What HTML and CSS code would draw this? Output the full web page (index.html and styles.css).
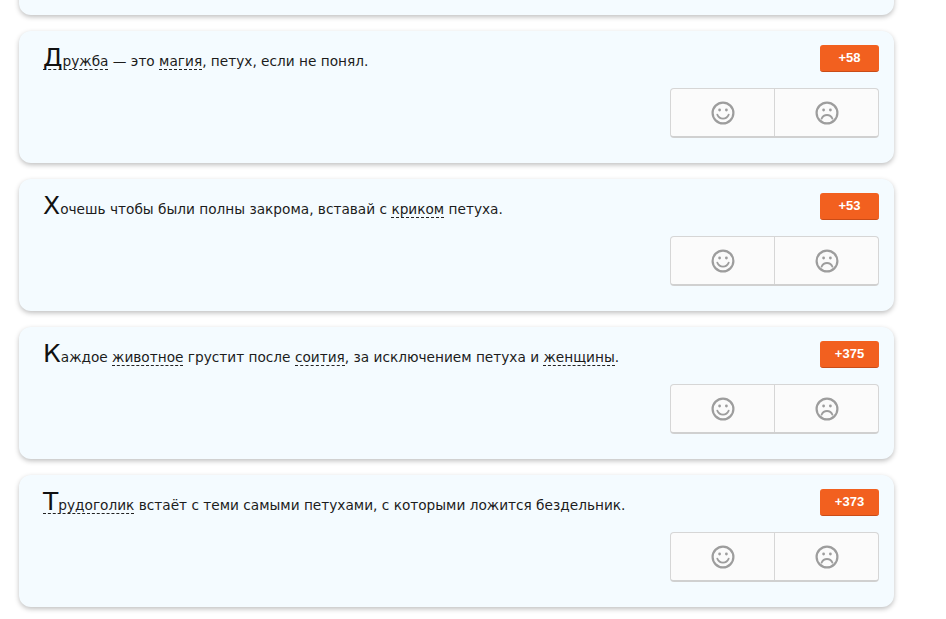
FILE: index.html
```html
<!DOCTYPE html>
<html lang="ru">
<head>
<meta charset="utf-8">
<title>Цитаты</title>
<link rel="stylesheet" href="styles.css">
</head>
<body>
<svg class="defs" width="0" height="0" aria-hidden="true">
  <symbol id="smile" viewBox="0 0 24 24">
    <circle cx="12" cy="12" r="10.4" fill="none" stroke="currentColor" stroke-width="2.2"/>
    <circle cx="8.6" cy="9" r="1.4" fill="currentColor"/>
    <circle cx="15.4" cy="9" r="1.4" fill="currentColor"/>
    <path d="M6.3 13.6c1.1 2.6 3.2 4 5.700 4s4.600-1.400 5.700-4" fill="none" stroke="currentColor" stroke-width="1.800" stroke-linecap="round"/>
  </symbol>
  <symbol id="sad" viewBox="0 0 24 24">
    <circle cx="12" cy="12" r="10.4" fill="none" stroke="currentColor" stroke-width="2.2"/>
    <circle cx="8.6" cy="9" r="1.4" fill="currentColor"/>
    <circle cx="15.4" cy="9" r="1.4" fill="currentColor"/>
    <path d="M6.600 17.600c1.100-2.400 3-3.600 5.400-3.600s4.300 1.200 5.400 3.600" fill="none" stroke="currentColor" stroke-width="1.800" stroke-linecap="round"/>
  </symbol>
</svg>
<main class="list">
  <article class="card"></article>

  <article class="card">
    <div class="head">
      <p class="quote"><a class="term"><span class="cap">Д</span>ружба</a> — это <a class="term">магия</a>, петух, если не понял.</p>
      <span class="score">+58</span>
    </div>
    <div class="votes"><button class="vote"><svg class="face"><use href="#smile"/></svg></button><button class="vote"><svg class="face"><use href="#sad"/></svg></button></div>
  </article>

  <article class="card">
    <div class="head">
      <p class="quote"><span class="cap">Х</span>очешь чтобы были полны закрома, вставай с <a class="term">криком</a> петуха.</p>
      <span class="score">+53</span>
    </div>
    <div class="votes"><button class="vote"><svg class="face"><use href="#smile"/></svg></button><button class="vote"><svg class="face"><use href="#sad"/></svg></button></div>
  </article>

  <article class="card">
    <div class="head">
      <p class="quote"><span class="cap">К</span>аждое <a class="term">животное</a> грустит после <a class="term">соития</a>, за исключением петуха и <a class="term">женщины</a>.</p>
      <span class="score">+375</span>
    </div>
    <div class="votes"><button class="vote"><svg class="face"><use href="#smile"/></svg></button><button class="vote"><svg class="face"><use href="#sad"/></svg></button></div>
  </article>

  <article class="card">
    <div class="head">
      <p class="quote"><a class="term"><span class="cap">Т</span>рудоголик</a> встаёт с теми самыми петухами, с которыми ложится бездельник.</p>
      <span class="score">+373</span>
    </div>
    <div class="votes"><button class="vote"><svg class="face"><use href="#smile"/></svg></button><button class="vote"><svg class="face"><use href="#sad"/></svg></button></div>
  </article>
</main>
</body>
</html>
```

FILE: styles.css
```css
html, body {
  margin: 0;
  height: 100%;
  overflow: hidden;
  background: #fff;
}
.defs { display: block; height: 0; }
.list {
  display: flex;
  flex-direction: column;
  gap: 16px;
  width: 875px;
  margin: -117px 0 0 19px;
  font-family: "DejaVu Sans", Verdana, sans-serif;
  color: #1c1c1c;
}
.card {
  display: flex;
  flex-direction: column;
  box-sizing: border-box;
  height: 132px;
  padding: 14px 15px 25px 24px;
  background: #f4fbff;
  border-radius: 12px;
  box-shadow: 0 2px 5px rgba(0, 0, 0, .25);
}
.head {
  display: flex;
  justify-content: space-between;
  align-items: flex-start;
  height: 43px;
}
.quote {
  margin: -2px 0 0;
  font-size: 13.7px;
  line-height: 30px;
}
.cap {
  font-size: 25px;
  color: #111;
}
.term {
  color: inherit;
  border-bottom: 1px dashed #222;
}
.score {
  box-sizing: border-box;
  width: 59px;
  height: 27px;
  background: #f2601f;
  border-bottom: 1px solid #c94c18;
  border-radius: 3px;
  color: #fff;
  font: bold 13px/26px "Liberation Sans", Arial, sans-serif;
  text-align: center;
}
.votes {
  display: flex;
  align-self: flex-end;
  width: 209px;
  height: 50px;
  box-sizing: border-box;
  background: #fbfbfb;
  border: 1px solid #d6d6d6;
  border-bottom: 2px solid #d0d0d0;
  border-radius: 4px;
}
.vote {
  flex: 1;
  display: flex;
  align-items: center;
  justify-content: center;
  padding: 0;
  border: 0;
  background: none;
  color: #9d9d9d;
}
.vote + .vote { border-left: 1px solid #d6d6d6; }
.face { width: 24px; height: 24px; }
```
